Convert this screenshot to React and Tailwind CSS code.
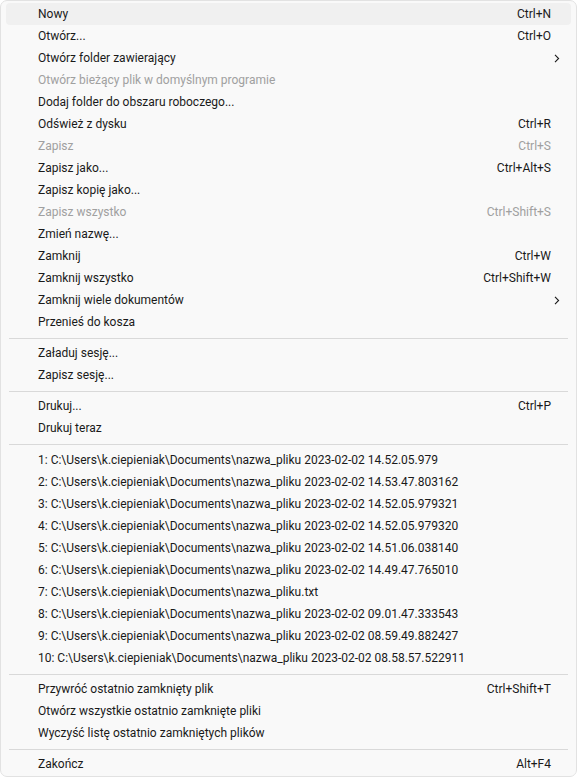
const groups = [
  [
    { t: "Nowy", s: "Ctrl+N", hl: true },
    { t: "Otwórz...", s: "Ctrl+O" },
    { t: "Otwórz folder zawierający", sub: true },
    { t: "Otwórz bieżący plik w domyślnym programie", d: true },
    { t: "Dodaj folder do obszaru roboczego..." },
    { t: "Odśwież z dysku", s: "Ctrl+R" },
    { t: "Zapisz", s: "Ctrl+S", d: true },
    { t: "Zapisz jako...", s: "Ctrl+Alt+S" },
    { t: "Zapisz kopię jako..." },
    { t: "Zapisz wszystko", s: "Ctrl+Shift+S", d: true },
    { t: "Zmień nazwę..." },
    { t: "Zamknij", s: "Ctrl+W" },
    { t: "Zamknij wszystko", s: "Ctrl+Shift+W" },
    { t: "Zamknij wiele dokumentów", sub: true },
    { t: "Przenieś do kosza" },
  ],
  [{ t: "Załaduj sesję..." }, { t: "Zapisz sesję..." }],
  [{ t: "Drukuj...", s: "Ctrl+P" }, { t: "Drukuj teraz" }],
  [
    { t: "1: C:\\Users\\k.ciepieniak\\Documents\\nazwa_pliku 2023-02-02 14.52.05.979" },
    { t: "2: C:\\Users\\k.ciepieniak\\Documents\\nazwa_pliku 2023-02-02 14.53.47.803162" },
    { t: "3: C:\\Users\\k.ciepieniak\\Documents\\nazwa_pliku 2023-02-02 14.52.05.979321" },
    { t: "4: C:\\Users\\k.ciepieniak\\Documents\\nazwa_pliku 2023-02-02 14.52.05.979320" },
    { t: "5: C:\\Users\\k.ciepieniak\\Documents\\nazwa_pliku 2023-02-02 14.51.06.038140" },
    { t: "6: C:\\Users\\k.ciepieniak\\Documents\\nazwa_pliku 2023-02-02 14.49.47.765010" },
    { t: "7: C:\\Users\\k.ciepieniak\\Documents\\nazwa_pliku.txt" },
    { t: "8: C:\\Users\\k.ciepieniak\\Documents\\nazwa_pliku 2023-02-02 09.01.47.333543" },
    { t: "9: C:\\Users\\k.ciepieniak\\Documents\\nazwa_pliku 2023-02-02 08.59.49.882427" },
    { t: "10: C:\\Users\\k.ciepieniak\\Documents\\nazwa_pliku 2023-02-02 08.58.57.522911" },
  ],
  [
    { t: "Przywróć ostatnio zamknięty plik", s: "Ctrl+Shift+T" },
    { t: "Otwórz wszystkie ostatnio zamknięte pliki" },
    { t: "Wyczyść listę ostatnio zamkniętych plików" },
  ],
  [{ t: "Zakończ", s: "Alt+F4" }],
];

function Chevron() {
  return (
    <svg width="6" height="9" viewBox="0 0 6 9" className="text-[#1b1b1b]">
      <path d="M1 0.8 L4.6 4.5 L1 8.2" fill="none" stroke="currentColor" strokeWidth="1.1" />
    </svg>
  );
}

function Item({ it }) {
  return (
    <div
      className={
        "relative flex h-[22px] items-center rounded-[4px] pl-[32px] pr-[20px] text-[12px] whitespace-nowrap " +
        (it.hl ? "bg-[#f0f0f0] " : "") +
        (it.d ? "text-[#a0a0a0]" : "text-[#1a1a1a]")
      }
    >
      <span className="flex-1">{it.t}</span>
      {it.s && <span>{it.s}</span>}
      {it.sub && (
        <span className="absolute right-[11px] top-[7px] flex">
          <Chevron />
        </span>
      )}
    </div>
  );
}

export default function App() {
  return (
    <div className="h-[777px] w-[577px] bg-white font-['Roboto',sans-serif]">
      <div className="flex h-full w-full flex-col rounded-[7px] border border-[#e2e2e2] bg-[#f9f9f9] px-[5px] pt-[2px]">
        {groups.map((g, gi) => (
          <div key={gi} className="flex flex-col">
            {gi > 0 && (
              <div className={"px-[3px] pt-[5px] " + (gi === 3 ? "pb-[4px]" : "pb-[3px]")}>
                <div className="h-px bg-[#d9d9d9]" />
              </div>
            )}
            {g.map((it, i) => (
              <Item key={i} it={it} />
            ))}
          </div>
        ))}
      </div>
    </div>
  );
}
